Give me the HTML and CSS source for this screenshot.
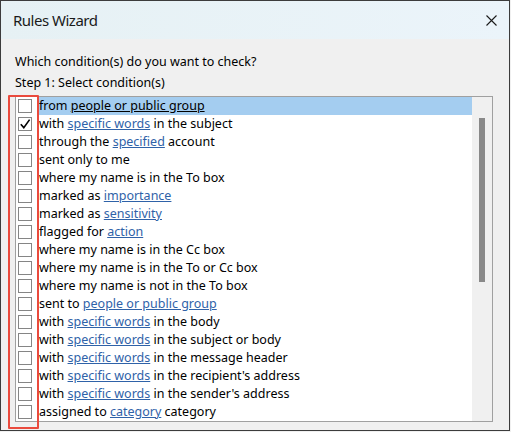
FILE: index.html
```html
<!DOCTYPE html>
<html lang="en">
<head>
<meta charset="utf-8">
<title>Rules Wizard</title>
<link rel="stylesheet" href="styles.css">
</head>
<body>
<div class="window">
  <div class="titlebar">
    <span class="title">Rules Wizard</span>
    <span class="close" aria-label="Close">
      <svg width="11" height="11" viewBox="0 0 11 11"><path d="M0.5 0.5 L10.5 10.5 M10.5 0.5 L0.5 10.5" stroke="#1a1a1a" stroke-width="1.1" fill="none"/></svg>
    </span>
  </div>
  <div class="content">
    <p class="line">Which condition(s) do you want to check?</p>
    <p class="line">Step 1: Select condition(s)</p>
    <div class="listbox">
      <ul class="items">
        <li class="row"><span class="box"></span><span class="label selected">from <a class="link">people or public group</a></span></li>
        <li class="row"><span class="box"><svg width="12" height="12" viewBox="0 0 12 12"><path d="M1.8 6.2 L4.8 9.6 L10.6 1.6" stroke="#000" stroke-width="1.6" fill="none"/></svg></span><span class="label">with <a class="link">specific words</a> in the subject</span></li>
        <li class="row"><span class="box"></span><span class="label">through the <a class="link">specified</a> account</span></li>
        <li class="row"><span class="box"></span><span class="label">sent only to me</span></li>
        <li class="row"><span class="box"></span><span class="label">where my name is in the To box</span></li>
        <li class="row"><span class="box"></span><span class="label">marked as <a class="link">importance</a></span></li>
        <li class="row"><span class="box"></span><span class="label">marked as <a class="link">sensitivity</a></span></li>
        <li class="row"><span class="box"></span><span class="label">flagged for <a class="link">action</a></span></li>
        <li class="row"><span class="box"></span><span class="label">where my name is in the Cc box</span></li>
        <li class="row"><span class="box"></span><span class="label">where my name is in the To or Cc box</span></li>
        <li class="row"><span class="box"></span><span class="label">where my name is not in the To box</span></li>
        <li class="row"><span class="box"></span><span class="label">sent to <a class="link">people or public group</a></span></li>
        <li class="row"><span class="box"></span><span class="label">with <a class="link">specific words</a> in the body</span></li>
        <li class="row"><span class="box"></span><span class="label">with <a class="link">specific words</a> in the subject or body</span></li>
        <li class="row"><span class="box"></span><span class="label">with <a class="link">specific words</a> in the message header</span></li>
        <li class="row"><span class="box"></span><span class="label">with <a class="link">specific words</a> in the recipient's address</span></li>
        <li class="row"><span class="box"></span><span class="label">with <a class="link">specific words</a> in the sender's address</span></li>
        <li class="row"><span class="box"></span><span class="label">assigned to <a class="link">category</a> category</span></li>
      </ul>
      <div class="scrollbar"><div class="thumb"></div></div>
    </div>
  </div>
  <div class="callout"></div>
</div>
</body>
</html>
```

FILE: styles.css
```css
html, body {
  margin: 0;
  padding: 0;
  background: #f0f0f0;
}

.window {
  position: relative;
  box-sizing: border-box;
  width: 510px;
  height: 431px;
  border: 1px solid #3c3c3c;
  background: #f0f0f0;
  font-family: "Noto Sans", "DejaVu Sans", sans-serif;
  color: #000;
  overflow: hidden;
}

.titlebar {
  display: flex;
  align-items: center;
  justify-content: space-between;
  height: 38px;
  padding: 0 12px 0 12px;
  background: linear-gradient(90deg, #e6f1f4, #ebf4fa);
}

.title {
  font-size: 15px;
  letter-spacing: -0.5px;
  color: #1a1a1a;
}

.close {
  display: flex;
  width: 11px;
  height: 11px;
  margin-top: 1px;
}

.content {
  padding: 12px 16px 0 14px;
}

.line {
  margin: 0;
  font-size: 12.5px;
  line-height: 21px;
}

.listbox {
  display: flex;
  margin-top: 3px;
  height: 326px;
  box-sizing: border-box;
  border: 1px solid #a0a0a0;
  background: #fff;
}

.items {
  flex: 1;
  margin: 0;
  padding: 0;
  list-style: none;
  font-size: 12.5px;
}

.row {
  display: flex;
  align-items: center;
  height: 18px;
}

.box {
  box-sizing: border-box;
  width: 14px;
  height: 14px;
  margin-left: 2px;
  border: 1px solid #858585;
  background: #fff;
  display: flex;
  align-items: center;
  justify-content: center;
}

.label {
  flex: 1;
  margin-left: 5px;
  padding-left: 2px;
  height: 18px;
  line-height: 18px;
  white-space: nowrap;
}

.label.selected {
  background: #a4cdf0;
}

.link {
  color: #2f62a8;
  text-decoration: underline;
}

.selected .link {
  color: #000;
}

.scrollbar {
  width: 20px;
  background: #f0f0f0;
  display: flex;
  justify-content: center;
}

.thumb {
  width: 6px;
  height: 164px;
  margin-top: 21px;
  background: #898989;
}

.callout {
  position: absolute;
  left: 7px;
  top: 94px;
  width: 31px;
  height: 334px;
  box-sizing: border-box;
  border: 2px solid #ea4a3d;
  border-radius: 1px;
}
```
